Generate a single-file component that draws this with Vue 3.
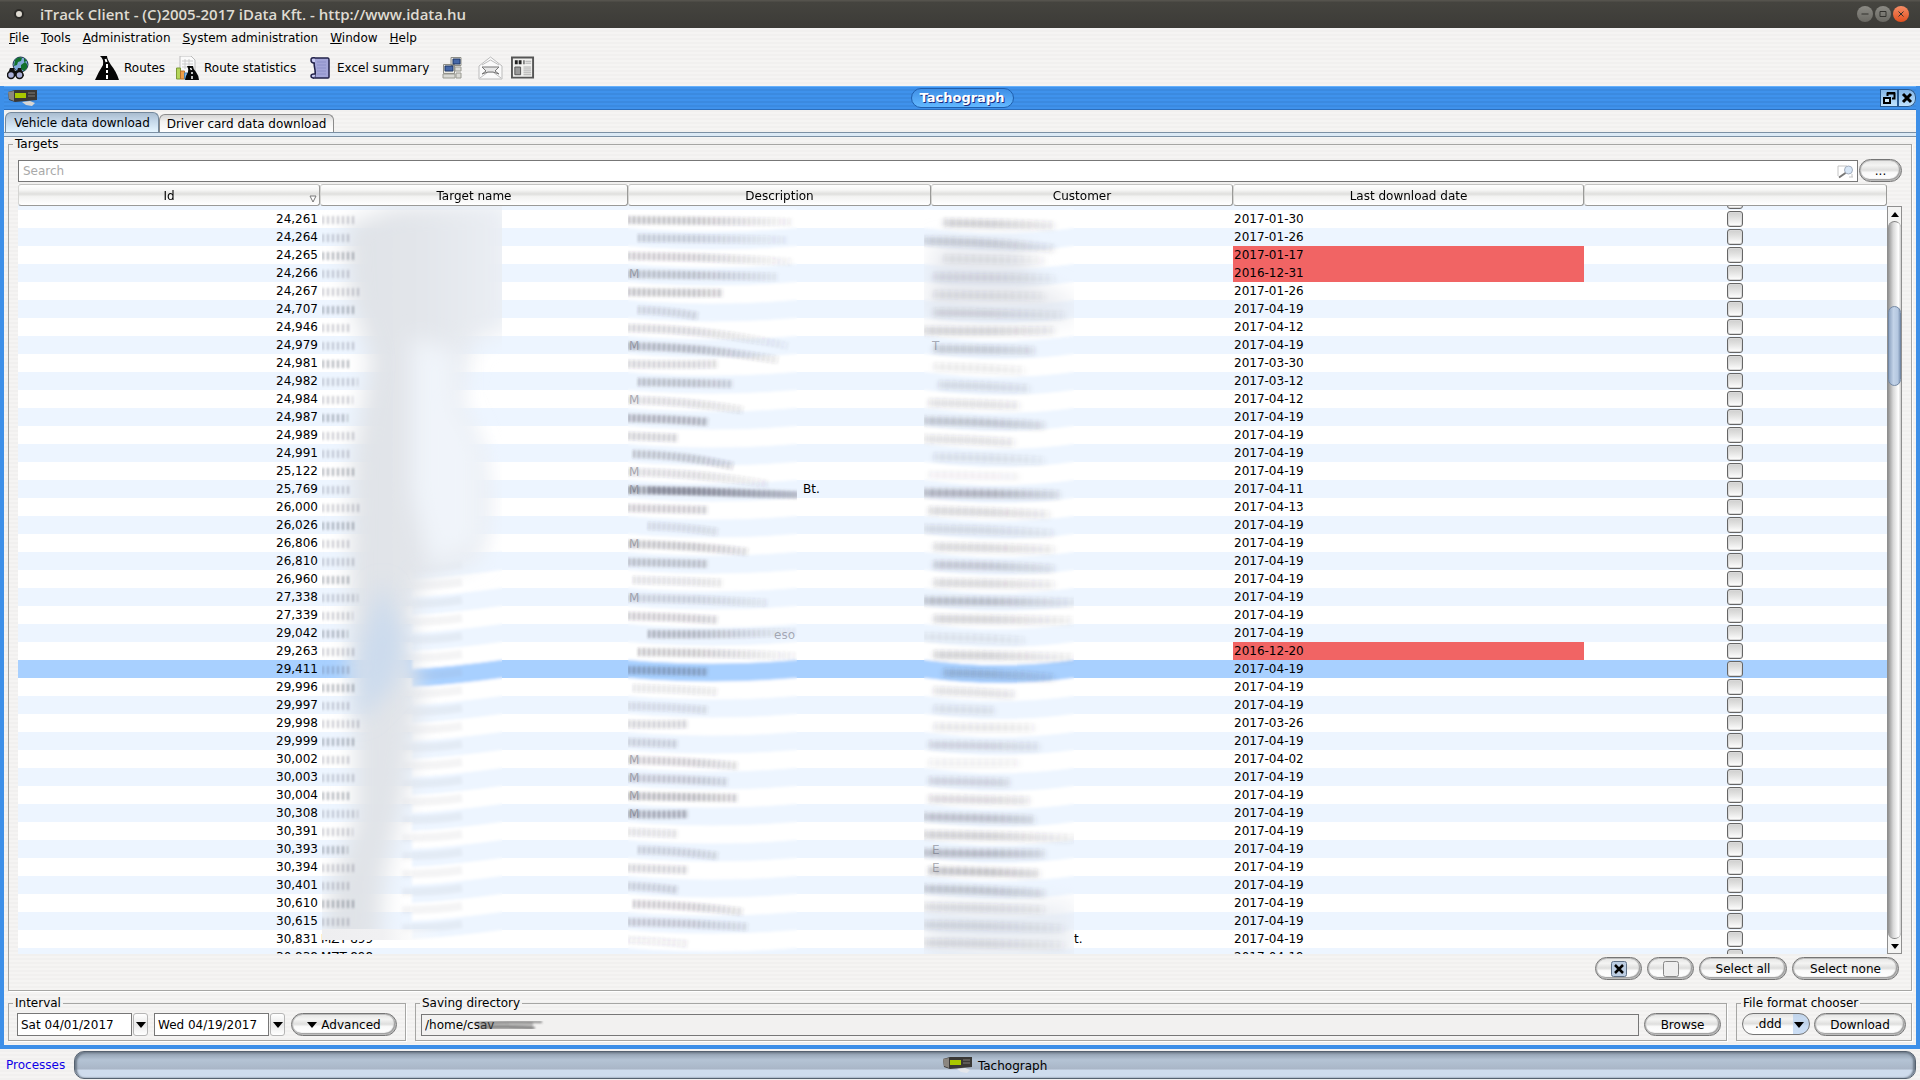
<script setup>
import { ref, onMounted } from 'vue'

const menus = ['File', 'Tools', 'Administration', 'System administration', 'Window', 'Help']

const columns = [
  { label: 'Id', width: 302, sorted: true },
  { label: 'Target name', width: 308 },
  { label: 'Description', width: 303 },
  { label: 'Customer', width: 302 },
  { label: 'Last download date', width: 351 },
  { label: '', width: 303 },
]

const rows = [
  ['24,260', '2017-01-30'], ['24,261', '2017-01-30'], ['24,264', '2017-01-26'], ['24,265', '2017-01-17', 'late'],
  ['24,266', '2016-12-31', 'late'], ['24,267', '2017-01-26'], ['24,707', '2017-04-19'], ['24,946', '2017-04-12'],
  ['24,979', '2017-04-19'], ['24,981', '2017-03-30'], ['24,982', '2017-03-12'], ['24,984', '2017-04-12'],
  ['24,987', '2017-04-19'], ['24,989', '2017-04-19'], ['24,991', '2017-04-19'], ['25,122', '2017-04-19'],
  ['25,769', '2017-04-11'], ['26,000', '2017-04-13'], ['26,026', '2017-04-19'], ['26,806', '2017-04-19'],
  ['26,810', '2017-04-19'], ['26,960', '2017-04-19'], ['27,338', '2017-04-19'], ['27,339', '2017-04-19'],
  ['29,042', '2017-04-19'], ['29,263', '2016-12-20', 'late'], ['29,411', '2017-04-19', 'selected'], ['29,996', '2017-04-19'],
  ['29,997', '2017-04-19'], ['29,998', '2017-03-26'], ['29,999', '2017-04-19'], ['30,002', '2017-04-02'],
  ['30,003', '2017-04-19'], ['30,004', '2017-04-19'], ['30,308', '2017-04-19'], ['30,391', '2017-04-19'],
  ['30,393', '2017-04-19'], ['30,394', '2017-04-19'], ['30,401', '2017-04-19'], ['30,610', '2017-04-19'],
  ['30,615', '2017-04-19'], ['30,831', '2017-04-19'], ['30,838', '2017-04-19'],
].map(([id, date, state], i) => ({ id, date, state, name: i === 41 ? 'MZT-899' : i === 42 ? 'MZT-898' : '' }))

// Smudges over private data: [start, length, drop, opacity] per visible row
const descSmears = [
  [0, 165, 2, .3], [10, 150, 2, .22], [0, 165, 6, .25], [0, 150, 3, .3], [0, 95, 1, .3], [10, 60, 6, .18],
  [0, 160, 18, .2], [0, 150, 14, .35], [0, 90, 0, .2], [10, 95, 2, .3], [0, 115, 10, .18], [0, 80, 4, .38],
  [0, 50, 2, .22], [5, 100, 12, .28], [0, 140, 12, .18], [0, 169, 5, .5], [0, 80, 2, .25], [20, 70, 6, .15],
  [0, 120, 8, .3], [0, 80, 2, .3], [5, 90, 3, .15], [0, 140, 5, .2], [0, 90, 4, .25], [20, 148, -2, .35],
  [10, 158, 4, .28], [0, 80, 2, .35], [5, 85, 4, .12], [0, 80, 4, .15], [0, 60, 0, .2], [0, 50, 2, .2],
  [0, 110, 6, .25], [0, 100, 4, .25], [0, 110, 2, .35], [0, 60, 0, .4], [0, 50, 2, .15], [10, 80, 6, .2],
  [0, 60, 2, .2], [0, 50, 4, .2], [5, 110, 8, .25], [0, 120, 5, .25], [0, 60, 4, .08],
]
const custSmears = [
  [20, 110, 3, .26], [0, 130, 8, .24], [20, 100, 2, .1], [10, 120, 2, .14], [10, 110, 2, .12], [10, 130, 3, .18],
  [0, 130, 0, .24], [10, 100, 2, .25], [10, 90, 4, .1], [15, 90, 4, .16], [5, 90, 3, .16], [0, 120, 5, .3],
  [0, 90, 4, .16], [10, 110, 4, .12], [5, 90, 2, .06], [0, 135, 2, .42], [5, 120, 4, .22], [0, 130, 5, .16],
  [10, 120, 3, .22], [10, 120, 4, .28], [10, 120, 2, .22], [0, 150, 2, .34], [10, 140, 2, .24], [0, 100, 4, .1],
  [10, 140, 3, .25], [20, 110, 5, .25], [10, 80, 4, .16], [10, 60, 2, .12], [10, 100, 1, .12], [5, 110, 2, .2],
  [5, 90, 0, .08], [5, 80, 2, .2], [5, 100, 2, .2], [0, 110, 3, .32], [0, 150, 4, .26], [0, 120, 1, .36],
  [5, 110, 3, .34], [0, 120, 5, .3], [0, 120, 3, .16], [0, 140, 4, .16], [0, 140, 3, .16],
]
const marks = [3, 7, 10, 14, 15, 18, 21, 30, 31, 32, 33]

function smear([start, length, drop], i, base) {
  const y = (i + 1) * 18 + base
  const x = start + length
  return `M${start} ${y} Q${start + length / 2} ${y + 1} ${x} ${y + drop}`
}
function band(i, width, sag) {
  const y = i * 18
  const a = width / 3
  const b = (width * 2) / 3
  return `M0 ${y} C${a} ${y + sag} ${b} ${y + sag} ${width} ${y} V${y + 18} C${b} ${y + 18 + sag} ${a} ${y + 18 + sag} 0 ${y + 18} Z`
}
function bandFill(i) {
  return i === 26 ? '#a8d0ff' : i % 2 ? '#ffffff' : '#edf5ff'
}

const scroller = ref(null)
onMounted(() => {
  scroller.value.scrollTop = 14
})
</script>

<template>
  <div class="app">
    <header class="titlebar">
      <span class="dot"></span>
      <h1>iTrack Client - (C)2005-2017 iData Kft. - http://www.idata.hu</h1>
      <button class="wm" aria-label="Minimize"><svg viewBox="0 0 16 16"><path d="M4.500 8h7" /></svg></button>
      <button class="wm" aria-label="Maximize"><svg viewBox="0 0 16 16"><path d="M5 5.500h6v5H5z" /></svg></button>
      <button class="wm close" aria-label="Close"><svg viewBox="0 0 16 16"><path d="M5.500 5.500l5 5M10.500 5.500l-5 5" /></svg></button>
    </header>

    <nav class="menubar">
      <button v-for="m in menus" :key="m"><u>{{ m[0] }}</u>{{ m.slice(1) }}</button>
    </nav>

    <div class="toolbar">
      <button class="tool tracking">
        <svg width="22" height="24" viewBox="0 0 22 24">
          <circle cx="13.500" cy="8.500" r="7.500" fill="#7fa9d8" stroke="#1c3350" />
          <path d="M8 4q4-4 7-2l-1 3-3 1-1 3-3 1zM14 9l4-3 2 2v4l-3 3-3-2zM17 2l3 3-3 1z" fill="#11702c" />
          <path d="M3 12h4l1 3h2l1-3h3l3 8H0z" fill="#111" />
          <circle cx="4" cy="19" r="3.500" fill="#aab0d8" stroke="#111" stroke-width="1.500" />
          <circle cx="12.500" cy="19" r="3.500" fill="#aab0d8" stroke="#111" stroke-width="1.500" />
        </svg>
        Tracking
      </button>
      <button class="tool routes">
        <svg width="24" height="24" viewBox="0 0 24 24">
          <path d="M5 0h7q0 3 4 9 5 6 8 15H0Q4 15 8 9 9 3 5 0z" fill="#050505" />
          <path d="M10.500 3l1 3M12 8v4M12 14v3M12 19v4" stroke="#fff" stroke-width="2" />
        </svg>
        Routes
      </button>
      <button class="tool stats">
        <svg width="23" height="24" viewBox="0 0 23 24">
          <path d="M4 0h11l4 4v15H4z" fill="#fafafa" stroke="#bbb" />
          <path d="M6 5h11M6 8h11M6 11h11M9 3v10M13 3v10" stroke="#ccc" />
          <path d="M0.500 12h4v11h-4z" fill="#b5d65a" stroke="#7d9a36" />
          <path d="M4.500 15h4v8h-4z" fill="#f0a04a" stroke="#b8702a" />
          <path d="M8.500 17h3v6h-3z" fill="#84b8e8" stroke="#4a7fb0" />
          <path d="M11 10h6q0 3 3 6 3 4 3 8H9q1-5 3-8 1-3-1-6z" fill="#080808" />
          <path d="M14.500 12l1 2M16 16v2M16 20v3" stroke="#fff" stroke-width="1.500" />
        </svg>
        Route statistics
      </button>
      <button class="tool excel">
        <svg width="20" height="24" viewBox="0 0 20 24">
          <path d="M4 2h14q1 0 1 2v17q0 1-1 1H4q2-3 1-8T4 6z" fill="#a3a5d8" stroke="#22224a" stroke-width="1.500" />
          <path d="M5 2q-4-1-4 2t3 3h1M4 22q-3 0-3-2t3-2h2" fill="#c9caf0" stroke="#22224a" stroke-width="1.500" />
          <path d="M7 6h9M7 9h9M7 12h9M7 15h9M7 18h9" stroke="#8c8fc8" />
        </svg>
        Excel summary
      </button>
      <button class="tool network" aria-label="Network">
        <svg width="21" height="24" viewBox="0 0 21 24">
          <path d="M9 1.500h10v8H9zM1.500 8.500h11v9h-11z" fill="#e8e8e4" stroke="#8d8d86" />
          <path d="M11 3h7v5h-7zM3 10h8v5H3z" fill="#4668a8" stroke="#1f3764" />
          <path d="M1 18h12v4H1zM13 11h6v4h-6zM14 17h5v5h-5z" fill="#d9d9d4" stroke="#9a9a92" />
        </svg>
      </button>
      <button class="tool mail" aria-label="Mail">
        <svg width="25" height="24" viewBox="0 0 25 24">
          <path d="M1 10L12.500 1 24 10v13H1z" fill="#fafafa" stroke="#bbb" />
          <path d="M2 22l8-6h5l8 6M4 9l8.500-5L21 9" fill="none" stroke="#bbb" />
          <path d="M4 11h17l-4 4 4 3-6-2h-5l-6 2 4-3z" fill="#e6e6e6" stroke="#777" />
        </svg>
      </button>
      <button class="tool" aria-label="News">
        <svg width="24" height="24" viewBox="0 0 25 24">
          <path d="M1 1h22v21H1z" fill="#f1f1ef" stroke="#555" stroke-width="2" />
          <path d="M4 4h3v4H4zM8 4h3v4H8zM13 4h1v4h-1z" fill="#222" />
          <path d="M15 5h6M15 7h6M13 11h8M13 13h8M13 15h8M13 17h8M13 19h8" stroke="#aaa" />
          <path d="M4 11h6v8H4z" fill="#999" stroke="#555" />
        </svg>
      </button>
    </div>

    <main class="frame">
      <div class="frame-title">
        <svg class="device" width="30" height="17" viewBox="0 0 30 17">
          <path d="M0 2l7-2h22v10l-22 2-6-2z" fill="#3a3835" />
          <path d="M0 2l6-1v10l-5-2z" fill="#8b8680" />
          <path d="M7 3h11v5H7z" fill="#a9c800" />
          <path d="M20 3h7M20 6h7" stroke="#807c78" />
          <path d="M14 12l8-1 5 2-3 3-6-1z" fill="#d8d6d2" />
        </svg>
        <h2>Tachograph</h2>
        <div class="frame-buttons">
          <button aria-label="Restore"><svg width="18" height="18" viewBox="0 0 18 18"><path d="M7.500 7V4.500h7v5H12M7 4h8" fill="none" stroke="#000" stroke-width="2" /><path d="M4 9h6v5H4z" fill="#d3ecff" stroke="#000" stroke-width="2" /></svg></button>
          <button aria-label="Close window"><svg width="18" height="18" viewBox="0 0 18 18"><path d="M5 5l8 8M13 5l-8 8" stroke="#000" stroke-width="3" /></svg></button>
        </div>
      </div>

      <div class="content">
        <div class="tabs" role="tablist">
          <button role="tab" aria-selected="true" class="active">Vehicle data download</button>
          <button role="tab" aria-selected="false">Driver card data download</button>
        </div>
        <div class="tab-strip"></div>

        <fieldset class="targets">
          <legend>Targets</legend>
          <div class="search-row">
            <label class="search">
              <input type="text" placeholder="Search" aria-label="Search">
              <svg width="17" height="14" viewBox="0 0 17 14">
                <path d="M1 1h9M1 1v10M12 12h4M15 9v3" stroke="#c4c4c4" fill="none" />
                <circle cx="11.500" cy="5" r="4" fill="#d7e6f6" stroke="#a3adbd" />
                <path d="M8.500 8L2 12.500" stroke="#777" stroke-width="2" />
              </svg>
            </label>
            <button class="pill more">...</button>
          </div>

          <div class="table-area">
            <div ref="scroller" class="scroller">
              <table>
                <colgroup>
                  <col v-for="(c, i) in columns" :key="i" :style="{ width: c.width + 'px' }">
                </colgroup>
                <thead>
                  <tr>
                    <th v-for="(c, i) in columns" :key="i">
                      <span>{{ c.label }}</span>
                      <svg v-if="c.sorted" class="sort" width="8" height="8" viewBox="0 0 8 8"><path d="M1 1h6L4 7z" fill="#fff" stroke="#777" /></svg>
                    </th>
                  </tr>
                </thead>
                <tbody>
                  <tr v-for="(r, i) in rows" :key="r.id" :class="r.state">
                    <td class="id">{{ r.id }}</td>
                    <td>
                      {{ r.name }}
                      <svg v-if="i === 0" class="smudge name" width="180" height="748" viewBox="0 0 180 748" aria-hidden="true">
                        <defs>
                          <filter id="b1" x="-10%" y="-10%" width="120%" height="120%"><feGaussianBlur stdDeviation="1" /></filter>
                          <filter id="soft" x="-30%" y="-30%" width="160%" height="160%"><feGaussianBlur stdDeviation="11" /></filter>
                          <filter id="b2" x="-10%" y="-10%" width="120%" height="120%"><feGaussianBlur stdDeviation="1.500" /></filter>
                          <linearGradient id="grey" x1="0" x2="1" y1="0" y2="0">
                            <stop offset="0" stop-color="#dfe2e6" /><stop offset=".5" stop-color="#e2e5ea" /><stop offset="1" stop-color="#ebeff5" />
                          </linearGradient>
                          <linearGradient id="out" x1="0" x2="1" y1="0" y2="0">
                            <stop offset="0" stop-color="#eeeef0" /><stop offset=".5" stop-color="#f0f0f2" /><stop offset="1" stop-color="#fff" stop-opacity="0" />
                          </linearGradient>
                        </defs>
                        <g filter="url(#b2)">
                          <path v-for="k in 22" :key="k" :d="`M90 ${(k + 19) * 18 + 9} Q130 ${(k + 19) * 18 + 7} 180 ${(k + 19) * 18} H190 v18 H180 Q130 ${(k + 19) * 18 + 25} 90 ${(k + 19) * 18 + 27}z`" :fill="bandFill(k + 19)" />
                          <path v-for="k in 21" :key="'g' + k" :d="`M80 ${(k + 19) * 18 + 16} q35 0 60 -4`" stroke="#9090a0" stroke-opacity=".1" stroke-width="8" fill="none" />
                        </g>
                        <path d="M23 33L70 15 190 8V138L150 150 135 208 158 258 168 308 158 368 98 388 88 448 98 508 83 608 63 688 58 758H0L8 698 33 628 33 548 28 448V368L30 268 48 168 28 108z" fill="url(#grey)" filter="url(#soft)" />
                        <path d="M90 145L135 160 135 208 160 258 160 350 110 375 90 300z" fill="#f0f4fa" filter="url(#soft)" />
                        <path d="M60 390L85 450 75 490 35 530 35 460z" fill="#c3d7ef" fill-opacity=".7" filter="url(#soft)" />
                        <g filter="url(#b1)">
                          <path v-for="k in 40" :key="'d' + k" :d="`M0 ${k * 18 + 10} H${26 + (k * 7) % 12}`" stroke="#454a58" :stroke-opacity="k % 3 ? .3 : .42" stroke-width="8" stroke-dasharray="2 3" />
                        </g>
                        <path d="M0 737H120V748H0z" fill="url(#out)" />
                      </svg>
                    </td>
                    <td>
                      <span v-if="i === 16" class="rest-desc">Bt.</span>
                      <svg v-if="i === 0" class="smudge desc" width="169" height="774" viewBox="0 0 169 774" aria-hidden="true">
                        <defs>
                          <linearGradient id="fade" gradientUnits="userSpaceOnUse" x1="0" x2="169" y1="0" y2="0">
                            <stop offset="0" stop-color="#403c4c" stop-opacity=".8" /><stop offset=".4" stop-color="#403c4c" stop-opacity=".8" /><stop offset="1" stop-color="#403c4c" stop-opacity=".1" />
                          </linearGradient>
                        </defs>
                        <g filter="url(#b2)"><path v-for="k in 42" :key="k" :d="band(k, 169, 5)" :fill="bandFill(k)" /></g>
                        <g filter="url(#b1)">
                          <path v-for="(s, k) in descSmears" :key="k" :d="smear(s, k, 10)" stroke="url(#fade)" :stroke-opacity="s[3]" stroke-width="8" stroke-dasharray="2 3" fill="none" />
                        </g>
                        <g filter="url(#b2)">
                          <path v-for="(s, k) in descSmears" :key="'w' + k" :d="smear(s, k, 10)" stroke="url(#fade)" :stroke-opacity="s[3] * .6" stroke-width="8" fill="none" />
                          <path d="M20 298Q90 301 175 303" stroke="#606478" stroke-opacity=".35" stroke-width="7" fill="none" />
                        </g>
                        <text v-for="k in marks" :key="'m' + k" x="1" :y="(k + 1) * 18 + 14">M</text>
                        <text x="146" y="447">eso</text>
                      </svg>
                    </td>
                    <td>
                      <span v-if="i === 41" class="rest-cust">t.</span>
                      <svg v-if="i === 0" class="smudge cust" width="150" height="774" viewBox="0 0 150 774" aria-hidden="true">
                        <defs>
                          <filter id="b3" x="-10%" y="-10%" width="120%" height="120%"><feGaussianBlur stdDeviation="3 2" /></filter>
                        </defs>
                        <g filter="url(#b2)"><path v-for="k in 42" :key="k" :d="band(k, 150, 7)" :fill="bandFill(k)" /></g>
                        <path d="M10 50H100L110 90 150 110V128H0z" fill="#dfe3ea" fill-opacity=".7" filter="url(#soft)" />
                        <path d="M0 710H150V774H0z" fill="#e4e8ef" fill-opacity=".7" filter="url(#soft)" />
                        <g filter="url(#b3)">
                          <path v-for="(s, k) in custSmears" :key="k" :d="smear(s, k, 13)" stroke="url(#fade)" :stroke-opacity="s[3] * .9" stroke-width="8" fill="none" />
                        </g>
                        <g filter="url(#b2)">
                          <path v-for="(s, k) in custSmears" :key="'w' + k" :d="smear(s, k, 12)" stroke="url(#fade)" :stroke-opacity="s[3] * .4" stroke-width="8" stroke-dasharray="3 4" fill="none" />
                        </g>
                        <text x="8" y="158">T</text>
                        <text x="8" y="662">E</text>
                        <text x="8" y="680">E</text>
                      </svg>
                    </td>
                    <td class="date">{{ r.date }}</td>
                    <td class="check"><input type="checkbox" :aria-label="'Select ' + r.id"></td>
                  </tr>
                </tbody>
              </table>
            </div>
            <div class="scrollbar">
              <button aria-label="Scroll up"><svg width="8" height="5" viewBox="0 0 8 5"><path d="M4 0l4 5H0z" /></svg></button>
              <div class="track"><div class="thumb"></div></div>
              <button aria-label="Scroll down"><svg width="8" height="5" viewBox="0 0 8 5"><path d="M4 5l4-5H0z" /></svg></button>
            </div>
          </div>

          <div class="select-row">
            <button class="pill box" aria-label="Check selected">
              <svg width="16" height="16" viewBox="0 0 16 16"><rect x=".5" y=".5" width="15" height="15" rx="2" fill="#bccde2" stroke="#5f7086" /><path d="M4 4l8 8M12 4l-8 8" stroke="#000" stroke-width="2.500" /></svg>
            </button>
            <button class="pill box" aria-label="Uncheck selected">
              <svg width="16" height="16" viewBox="0 0 16 16"><rect x=".5" y=".5" width="15" height="15" rx="2" fill="#eee" stroke="#888" /></svg>
            </button>
            <button class="pill all">Select all</button>
            <button class="pill none">Select none</button>
          </div>
        </fieldset>

        <div class="bottom">
          <fieldset class="interval">
            <legend>Interval</legend>
            <div class="date-picker">
              <input type="text" value="Sat 04/01/2017" aria-label="From">
              <button aria-label="Pick start date"><svg width="10" height="6" viewBox="0 0 10 6"><path d="M0 0h10L5 6z" /></svg></button>
            </div>
            <div class="date-picker">
              <input type="text" value="Wed 04/19/2017" aria-label="To">
              <button aria-label="Pick end date"><svg width="10" height="6" viewBox="0 0 10 6"><path d="M0 0h10L5 6z" /></svg></button>
            </div>
            <button class="pill advanced"><svg width="10" height="6" viewBox="0 0 10 6"><path d="M0 0h10L5 6z" /></svg>Advanced</button>
          </fieldset>

          <fieldset class="saving">
            <legend>Saving directory</legend>
            <label class="path">
              <input type="text" value="/home/csav" aria-label="Saving directory" readonly>
              <svg width="80" height="14" viewBox="0 0 80 14" aria-hidden="true">
                <g filter="url(#b1)" fill="none" stroke="#555">
                  <path d="M8 8H62" stroke-width="8" stroke-opacity=".35" />
                  <path d="M4 5Q35 3 71 4M10 9Q40 8 64 10" stroke-width="2" stroke-opacity=".7" />
                </g>
              </svg>
            </label>
            <button class="pill browse">Browse</button>
          </fieldset>

          <fieldset class="format">
            <legend>File format chooser</legend>
            <label class="combo">
              <select aria-label="File format"><option>.ddd</option></select>
              <svg width="10" height="6" viewBox="0 0 10 6"><path d="M0 0h10L5 6z" /></svg>
            </label>
            <button class="pill download">Download</button>
          </fieldset>
        </div>
      </div>
    </main>

    <footer class="taskbar">
      <a href="#">Processes</a>
      <button>
        <svg width="30" height="17" viewBox="0 0 30 17">
          <path d="M0 2l7-2h22v10l-22 2-6-2z" fill="#3a3835" />
          <path d="M0 2l6-1v10l-5-2z" fill="#8b8680" />
          <path d="M7 3h11v5H7z" fill="#a9c800" />
          <path d="M20 3h7M20 6h7" stroke="#807c78" />
          <path d="M14 12l8-1 5 2-3 3-6-1z" fill="#e4e6ea" />
        </svg>
        Tachograph
      </button>
    </footer>
  </div>
</template>

<style>
body { margin: 0; overflow: hidden; }
</style>

<style scoped>
* { box-sizing: border-box; }
.app {
  display: flex;
  flex-direction: column;
  height: 100vh;
  font: 12px/14px "DejaVu Sans", sans-serif;
  color: #000;
  background: repeating-linear-gradient(#f5f4f3 0 2px, #f1f0ef 2px 4px);
}
button, input, select { font: inherit; color: inherit; margin: 0; }
button { padding: 0; border: 0; background: none; white-space: nowrap; }
svg { display: block; flex: none; }

.titlebar {
  display: flex;
  align-items: center;
  gap: 2px;
  height: 28px;
  padding: 0 11px 0 14px;
  background: linear-gradient(#55534d 0 1px, #45443f 2px, #3c3b37);
}
.dot { width: 10px; height: 10px; border: 2px solid #2b2a27; border-radius: 50%; background: #dfdbd2; }
h1 { flex: 1; margin: 0 0 0 14px; font: 600 15px/28px "Open Sans", sans-serif; color: #dfdbd2; }
.wm { width: 16px; height: 16px; border-radius: 50%; background: linear-gradient(#8b8a84, #6a6963); stroke: #33322e; fill: none; }
.wm.close { background: linear-gradient(#f58d66, #e2501f); }

.menubar { display: flex; gap: 12px; height: 22px; padding: 0 9px 2px; align-items: center; }

.toolbar { display: flex; align-items: center; height: 36px; padding-left: 7px; }
.tool { display: flex; align-items: center; gap: 5px; }
.tracking { width: 88px; }
.routes { width: 81px; }
.stats { width: 134px; }
.excel { gap: 7px; width: 132px; }
.network { width: 36px; }
.mail { width: 33px; }

.frame {
  flex: 1;
  min-height: 0;
  display: flex;
  flex-direction: column;
  border: solid #3d8fe8;
  border-width: 0 4px 4px;
}
.frame-title {
  display: grid;
  grid-template-columns: 1fr auto 1fr;
  align-items: center;
  height: 24px;
  padding-left: 4px;
  border-top: 1px solid #66b0fa;
  border-bottom: 1px solid #2c6fbd;
  background: repeating-linear-gradient(#3f92ec 0 2px, #3b8ae0 2px 4px);
}
h2 {
  margin: 0;
  width: 103px;
  font: bold 13px/18px "DejaVu Sans", sans-serif;
  text-align: center;
  color: #fff;
  text-shadow: 1px 1px 0 #1a2a80;
  border: 1px solid #1f5fae;
  border-radius: 10px;
  background: linear-gradient(#3f8fe6, #62b8ff);
}
.frame-buttons { display: flex; justify-self: end; }
.frame-buttons button { width: 18px; height: 18px; background: linear-gradient(#7fb2e6, #c4e6ff); box-shadow: inset 0 0 0 1px #27588f; }
.frame-buttons button:last-child { border-radius: 0 8px 8px 0; }

.content {
  flex: 1;
  min-height: 0;
  display: flex;
  flex-direction: column;
  padding-bottom: 4px;
}
.tabs { display: flex; align-items: flex-end; height: 22px; padding-left: 1px; }
.tabs button {
  width: 175px;
  height: 18px;
  padding-top: 1px;
  border: 1px solid #8b8b8b;
  border-bottom: 0;
  border-radius: 6px 6px 0 0;
  background: linear-gradient(#d6d6d6, #f3f2f1 40%, #fff);
}
.tabs .active {
  width: 154px;
  height: 20px;
  border-color: #74889c;
  background: linear-gradient(#a9bccf, #c3d6e8 40%, #e6f5ff);
}
.tab-strip { height: 5px; border: solid #7b8fa3; border-width: 1px 0; background: #dbe9f5; }

fieldset { margin: 0; min-width: 0; border: 1px solid #a6a6a4; box-shadow: 1px 1px 0 #fff; }
legend { padding: 1px 2px 0; line-height: 13px; }
.targets {
  flex: 1;
  min-height: 0;
  display: flex;
  flex-direction: column;
  margin: 0 4px 5px;
  padding: 8px 9px 10px;
}
.targets legend { margin-left: -5px; }
.search-row { display: flex; gap: 1px; height: 23px; }
.search { position: relative; flex: 1; display: flex; padding-top: 1px; }
.search input { width: 100%; padding: 0 4px; border: 1px solid #777; background: #fff; outline: 0; }
.search input::placeholder { color: #a9a9a9; opacity: 1; }
.search svg { position: absolute; right: 4px; top: 6px; }

.pill {
  display: flex;
  align-items: center;
  justify-content: center;
  height: 23px;
  border: 1px solid #757575;
  border-radius: 12px;
  background: linear-gradient(#e3e3e2, #f4f4f3 25%, #dededd 48%, #fafafa 60%, #fff);
  box-shadow: inset 0 0 0 1px #bdbdbd, inset -1px -1px 1px 1px #9a9a9a;
}
.more { width: 43px; }

.table-area { flex: 1; min-height: 0; display: flex; margin-top: 2px; }
.scroller { flex: 1; overflow: hidden; background: #fff; }
table { width: 100%; table-layout: fixed; border-collapse: separate; border-spacing: 0; }
th {
  position: sticky;
  top: 0;
  z-index: 2;
  height: 22px;
  padding: 1px 0 0;
  font-weight: normal;
  border: 1px solid #9a9a98;
  border-top-color: #c4c4c2;
  border-left-color: #d5d5d3;
  border-radius: 3px;
  background: linear-gradient(#fff, #f6f6f5 25%, #dfdfdd 45%, #f3f3f2 58%, #fff);
}
.sort { position: absolute; right: 2px; bottom: 2px; }
td { position: relative; height: 18px; padding: 1px 2px 0 1px; white-space: nowrap; line-height: 17px; }
tbody tr:nth-child(odd) { background: #edf5ff; }
tbody tr.selected { background: #a8d0ff; }
.late .date { background: #f16464; }
.id { text-align: right; }
.check { padding: 0 2px 0 0; }
.check input {
  appearance: none;
  display: block;
  width: 16px;
  height: 16px;
  margin: 0 auto;
  border: 1px solid #666;
  border-radius: 3px;
  background: linear-gradient(#cfcfce, #e0e0df 40%, #fff);
  box-shadow: inset 0 0 0 1px #d9d9d9;
}
.smudge { position: absolute; top: 0; z-index: 1; pointer-events: none; }
.smudge text { font-size: 12px; fill: #505060; fill-opacity: .45; }
.name { left: 2px; }
.desc { left: 0; }
.cust { left: -7px; }
.rest-desc { padding-left: 174px; }
.rest-cust { padding-left: 142px; }

.scrollbar {
  display: flex;
  flex-direction: column;
  width: 15px;
  margin-top: 22px;
  border: 1px solid #8f8f8f;
  background: #f4f4f3;
}
.scrollbar button { height: 14px; display: flex; align-items: center; justify-content: center; }
.track {
  flex: 1;
  border: 1px solid #808080;
  border-width: 1px 0;
  border-radius: 7px;
  padding-top: 84px;
  background: linear-gradient(90deg, #8f8f8f, #d8d8d8 40%, #fff 80%, #ccc);
}
.thumb {
  height: 80px;
  border-radius: 7px;
  border: 1px solid #7388a4;
  background: linear-gradient(90deg, #8ea4c2, #c3d3e8 40%, #b4c7e0 80%, #8299b8);
}

.select-row { display: flex; justify-content: flex-end; gap: 5px; margin-top: 3px; padding-right: 3px; }
.box { width: 47px; }
.all { width: 88px; }
.none { width: 107px; }

.bottom { display: flex; gap: 9px; padding: 0 4px; }
.bottom fieldset { display: flex; padding: 3px 5px 4px; }
.bottom legend { margin-left: -1px; }
.bottom .interval { padding: 3px 8px 4px; gap: 6px; }
.interval legend { margin-left: -4px; }
.date-picker { display: flex; gap: 1px; }
.date-picker input { width: 115px; height: 23px; padding: 0 3px; border: 1px solid #777; background: #fff; outline: 0; }
.date-picker button {
  width: 15px;
  height: 23px;
  display: flex;
  align-items: center;
  justify-content: center;
  border: 1px solid #b5b5b5;
  border-radius: 3px;
  background: linear-gradient(#fff, #e9e9e9 50%, #fff);
}
.advanced { width: 106px; gap: 4px; }
.saving { flex: 1; gap: 5px; }
.path { position: relative; flex: 1; display: flex; }
.path input { width: 100%; height: 22px; margin-top: 1px; padding: 0 3px; border: 1px solid #777; background: #f2f1f0; outline: 0; }
.path svg { position: absolute; left: 50px; top: 5px; }
.browse { width: 77px; }
.format { gap: 4px; }
.combo { position: relative; }
.combo select {
  appearance: none;
  width: 68px;
  height: 22px;
  padding: 0 0 0 12px;
  border: 1px solid #757575;
  border-radius: 11px;
  outline: 0;
  background: linear-gradient(90deg, transparent 50px, #a9c8ee99 50px), linear-gradient(#e3e3e2, #f4f4f3 25%, #dededd 48%, #fafafa 60%, #fff);
}
.combo svg { position: absolute; right: 6px; top: 9px; pointer-events: none; }
.download { width: 92px; }

.taskbar { display: flex; align-items: center; gap: 9px; height: 31px; padding: 2px 4px 1px 6px; }
.taskbar a { color: #1000e8; text-decoration: none; }
.taskbar button {
  flex: 1;
  display: flex;
  align-items: center;
  justify-content: center;
  gap: 5px;
  height: 28px;
  padding-top: 1px;
  border: 1px solid #55616f;
  border-radius: 10px;
  background: linear-gradient(#8c9bab, #b4c3d4 30%, #a9b6c7 65%, #cfdced 70%, #cfdced);
  box-shadow: inset 2px 1px 2px #6e7b8a, inset -2px 0 2px #6e7b8a;
}
</style>
